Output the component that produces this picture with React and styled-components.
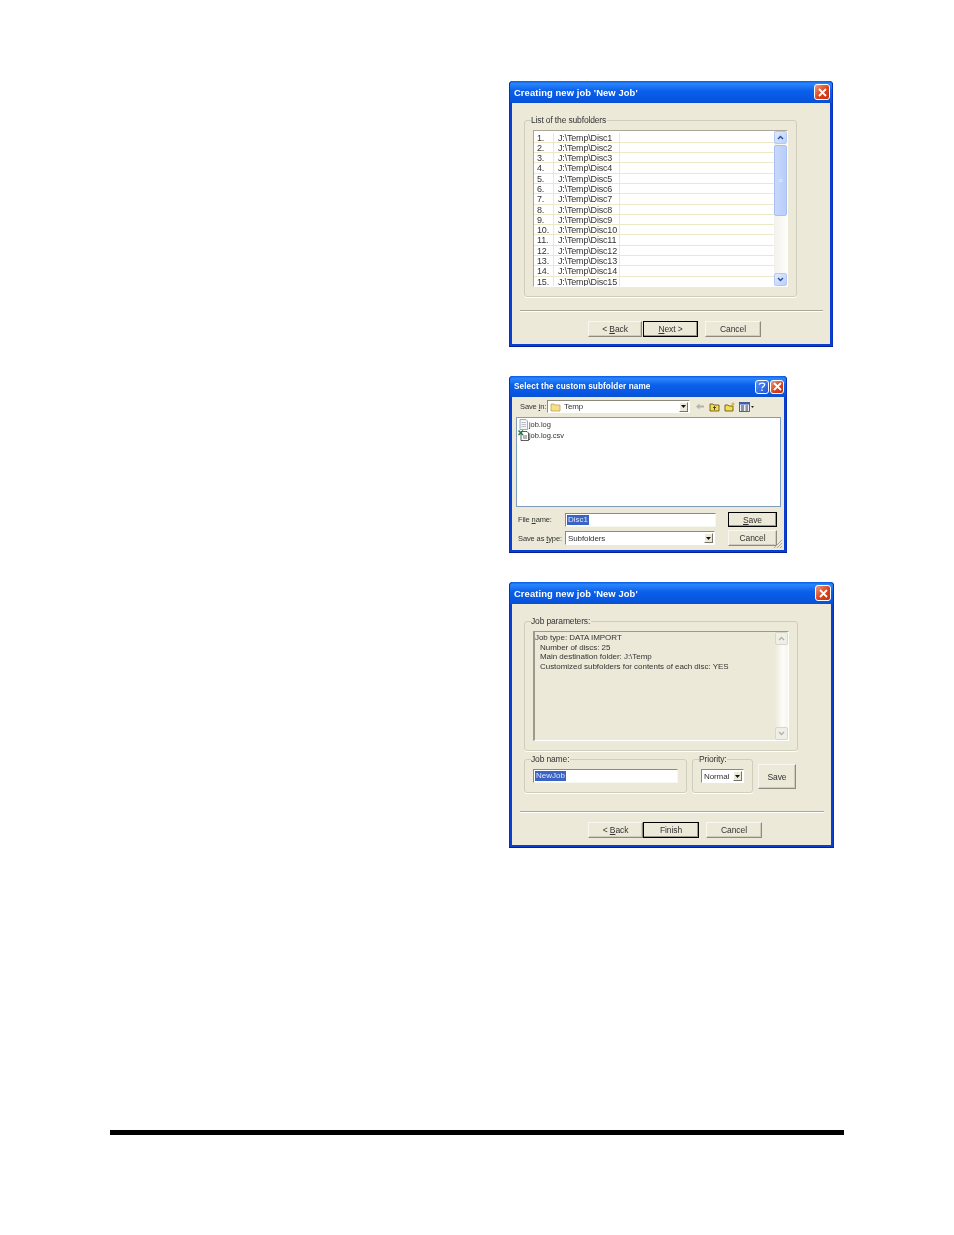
import React from 'react'
import styled, { createGlobalStyle } from 'styled-components';

const GlobalStyle = createGlobalStyle`
  html, body {
    margin: 0;
    padding: 0;
    background: #fff;
  }
  body {
    font-family: "Liberation Sans", Arial, sans-serif;
    font-size: 8px;
    color: #222;
  }
`;

const Page = styled.div`
  width: 954px;
  height: 1235px;
  box-sizing: border-box;
  padding: 81px 110px 0;
  overflow: hidden;
`;

const Windows = styled.div`
  margin-left: 399px;
  display: flex;
  flex-direction: column;
  gap: 29px;
  align-items: flex-start;
`;

const Rule = styled.div`
  height: 5px;
  background: #000;
  margin-top: 282px;
`;

const Frame = styled.div`
  width: ${(p) => p.$width}px;
  box-sizing: border-box;
  padding: 0 3px 3px;
  background: #0a3fd0;
  border-radius: 4px 4px 0 0;
  box-shadow: inset 0 -1px 0 #04209a, inset 1px 0 0 #0830b8, inset -1px 0 0 #0830b8;
  filter: blur(0.25px);
`;

const TitleBar = styled.div`
  height: ${(p) => (p.$small ? 21 : 22)}px;
  margin: 0 -2px;
  padding: 0 2px 0 4px;
  display: flex;
  align-items: center;
  gap: 1px;
  border-radius: 4px 4px 0 0;
  background: linear-gradient(180deg, #0a5ce8 0%, #2a86fa 12%, #0a5fea 45%, #0757e2 80%, #0a50d0 100%);
`;

const TitleText = styled.div`
  flex: 1;
  color: #fff;
  font-weight: bold;
  font-size: ${(p) => (p.$small ? 8.2 : 9.4)}px;
  letter-spacing: 0.1px;
  white-space: nowrap;
`;

const CaptionButton = styled.div`
  width: ${(p) => (p.$small ? 12 : 14)}px;
  height: ${(p) => (p.$small ? 12 : 14)}px;
  border: 1px solid #fff;
  border-radius: 3px;
  display: flex;
  align-items: center;
  justify-content: center;
  background: ${(p) =>
    p.$help
      ? 'linear-gradient(135deg, #5a92f5, #1e55d8)'
      : 'linear-gradient(135deg, #ee9a80, #d8431c 55%, #c23210)'};
`;

const Body = styled.div`
  background: #ece9d8;
  padding: ${(p) => p.$padding};
  position: relative;
`;

const Group = styled.fieldset`
  margin: ${(p) => p.$margin || '0'};
  padding: ${(p) => p.$padding || '5px 8px 9px'};
  width: ${(p) => p.$width}px;
  box-sizing: border-box;
  border: 1px solid #cfcdbd;
  border-radius: 3px;
  min-width: 0;
  box-shadow: 0 1px 0 #fff;
`;

const Legend = styled.legend`
  padding: 0 1px 0 0;
  margin-left: -2px;
  height: 10px;
  line-height: 11px;
  font-size: 8.5px;
  letter-spacing: -0.15px;
  color: #333;
`;

const ListBox = styled.div`
  height: 157px;
  display: flex;
  overflow: hidden;
  box-sizing: border-box;
  border-top: 1px solid #aca899;
  border-left: 1px solid #aca899;
  border-right: 1px solid #fff;
  border-bottom: 1px solid #fff;
  background: #fff;
`;

const Rows = styled.div`
  flex: 1;
  overflow: hidden;
  padding-top: 1.5px;
`;

const Row = styled.div`
  display: grid;
  grid-template-columns: 20px 66px 1fr;
  height: 10.3px;
  line-height: 10px;
  box-sizing: border-box;
  border-bottom: 1px solid #ece9c8;
  font-size: 9px;
  letter-spacing: -0.18px;
  color: #333;
`;

const Cell = styled.div`
  padding-left: ${(p) => p.$pad}px;
  border-right: ${(p) => (p.$line ? '1px solid #ece9c8' : 'none')};
  white-space: nowrap;
`;

const Scrollbar = styled.div`
  width: 13px;
  flex: none;
  display: flex;
  flex-direction: column;
  background: ${(p) =>
    p.$disabled
      ? 'linear-gradient(90deg, #ece9d8, #fdfdfa 60%, #f6f5ee)'
      : 'linear-gradient(90deg, #f3f1ec, #fdfdfa)'};
`;

const ScrollButton = styled.div`
  height: 13px;
  flex: none;
  box-sizing: border-box;
  border: 1px solid ${(p) => (p.$disabled ? '#d8d6c8' : '#b4c8f6')};
  border-radius: 2px;
  background: ${(p) => (p.$disabled ? '#f0efe6' : 'linear-gradient(135deg, #e1eafe, #bcd0fa)')};
  display: flex;
  align-items: center;
  justify-content: center;
`;

const ScrollThumb = styled.div`
  height: 71px;
  flex: none;
  margin-top: 1px;
  box-sizing: border-box;
  border: 1px solid #a8bff4;
  border-radius: 2px;
  background: linear-gradient(90deg, #c9d8fc, #b8cdfa);
  display: flex;
  align-items: center;
  justify-content: center;
  color: #eef3ff;
  font-size: 7px;
  line-height: 7px;
`;

const ScrollGap = styled.div`
  flex: 1;
`;

const Separator = styled.div`
  margin: ${(p) => p.$margin};
  border-top: 1px solid #aca899;
  border-bottom: 1px solid #fff;
`;

const ButtonRow = styled.div`
  display: flex;
  padding-left: 76px;
  margin-top: 9px;
`;

const Button = styled.div`
  width: ${(p) => p.$width}px;
  height: ${(p) => p.$height || 16}px;
  margin: ${(p) => p.$margin || '0'};
  box-sizing: border-box;
  flex: none;
  display: flex;
  align-items: center;
  justify-content: center;
  font-size: 8.5px;
  letter-spacing: -0.1px;
  color: #333;
  background: #ece9d8;
  border-style: solid;
  border-width: 1px;
  border-color: ${(p) => (p.$primary ? '#000' : '#f8f7f0 #8d8b7e #8d8b7e #f8f7f0')};
  box-shadow: ${(p) =>
    p.$primary ? 'inset -1px -1px 0 #9a988b' : 'inset -1px -1px 0 #d0cdbc'};
`;

const SaveBar = styled.div`
  display: flex;
  align-items: center;
  padding: 0 0 0 8px;
  height: 13px;
`;

const FieldLabel = styled.div`
  width: ${(p) => p.$width}px;
  flex: none;
  font-size: 7.5px;
  letter-spacing: -0.12px;
  color: #333;
  white-space: nowrap;
`;

const Combo = styled.div`
  width: ${(p) => p.$width}px;
  height: ${(p) => p.$height || 14}px;
  flex: none;
  box-sizing: border-box;
  display: flex;
  align-items: center;
  gap: 3px;
  padding-left: ${(p) => p.$pad || 2}px;
  background: #fff;
  border-top: 1px solid #8c8a7c;
  border-left: 1px solid #8c8a7c;
  border-right: 1px solid #fff;
  border-bottom: 1px solid #fff;
  font-size: 8px;
  letter-spacing: -0.1px;
  color: #333;
`;

const ComboText = styled.div`
  flex: 1;
  white-space: nowrap;
`;

const ComboArrow = styled.div`
  width: 9px;
  height: 10px;
  flex: none;
  margin-right: 1px;
  box-sizing: border-box;
  display: flex;
  align-items: center;
  justify-content: center;
  background: #ece9d8;
  border: 1px solid;
  border-color: #fff #77756a #77756a #fff;
`;

const Tools = styled.div`
  display: flex;
  align-items: center;
  gap: 4px;
  margin-left: 5px;
`;

const FileList = styled.div`
  height: 90px;
  margin: 4px 3px 0 4px;
  box-sizing: border-box;
  padding: 1px 0 0 1px;
  background: #fff;
  border: 1px solid #7f9db9;
`;

const FileRow = styled.div`
  display: flex;
  align-items: center;
  height: 11px;
  font-size: 7.5px;
  letter-spacing: -0.05px;
  color: #333;
`;

const FormGrid = styled.div`
  display: grid;
  grid-template-columns: 47px 151px 49px;
  column-gap: 0;
  row-gap: 3px;
  align-items: center;
  margin: 5px 0 0 6px;
`;

const TextField = styled.div`
  height: 14px;
  box-sizing: border-box;
  padding: 1px 0 0 1px;
  background: #fff;
  border-top: 1px solid #8c8a7c;
  border-left: 1px solid #8c8a7c;
  border-right: 1px solid #f8f8f2;
  border-bottom: 1px solid #f8f8f2;
  font-size: 8px;
  line-height: 10px;
`;

const Selected = styled.span`
  display: inline-block;
  background: #3a64c4;
  color: #dfe6fa;
  height: 10px;
  padding: 0 1px;
`;

const Grip = styled.svg`
  position: absolute;
  right: 1px;
  bottom: 1px;
`;

const ParamsBox = styled.div`
  height: 110px;
  display: flex;
  box-sizing: border-box;
  border-top: 1px solid #9c9a8c;
  border-left: 2px solid #9c9a8c;
  border-right: 1px solid #fff;
  border-bottom: 1px solid #fff;
`;

const ParamsText = styled.div`
  flex: 1;
  padding-top: 1px;
  font-size: 8px;
  letter-spacing: -0.04px;
  line-height: 9.6px;
  color: #333;
`;

const ParamLine = styled.div`
  padding-left: ${(p) => (p.$first ? 0 : 5)}px;
  white-space: nowrap;
`;

const LowerRow = styled.div`
  display: flex;
  align-items: flex-start;
  margin-top: 3px;
`;

const ChevronUp = ({ color = '#2a4d9a' }) => (
  <svg width="7" height="5" viewBox="0 0 7 5">
    <path d="M1 4 L3.5 1.5 L6 4" fill="none" stroke={color} strokeWidth="1.4" />
  </svg>
);

const ChevronDown = ({ color = '#2a4d9a' }) => (
  <svg width="7" height="5" viewBox="0 0 7 5">
    <path d="M1 1 L3.5 3.5 L6 1" fill="none" stroke={color} strokeWidth="1.4" />
  </svg>
);

const CaretDown = () => (
  <svg width="5" height="3" viewBox="0 0 5 3">
    <path d="M0 0 H5 L2.5 3 Z" fill="#111" />
  </svg>
);

const CloseIcon = () => (
  <svg width="9" height="9" viewBox="0 0 9 9">
    <path d="M1 1 L8 8 M8 1 L1 8" stroke="#fff" strokeWidth="1.8" />
  </svg>
);

const FolderIcon = () => (
  <svg width="11" height="10" viewBox="0 0 11 10">
    <path d="M1 2 H4 L5 3 H10 V9 H1 Z" fill="#f7e08a" stroke="#b89a3a" strokeWidth="0.7" />
  </svg>
);

const BackIcon = () => (
  <svg width="10" height="9" viewBox="0 0 10 9">
    <path d="M1 4.5 L4.5 1.5 V3.5 H9 V5.5 H4.5 V7.5 Z" fill="#b5b3a6" />
  </svg>
);

const UpFolderIcon = () => (
  <svg width="11" height="10" viewBox="0 0 11 10">
    <path d="M1 2 H4 L5 3 H10 V9 H1 Z" fill="#f2dc50" stroke="#5a4a10" strokeWidth="0.8" />
    <path d="M5.5 8 V4.8 M4 6 L5.5 4.5 L7 6" fill="none" stroke="#222" strokeWidth="0.8" />
  </svg>
);

const NewFolderIcon = () => (
  <svg width="11" height="10" viewBox="0 0 11 10">
    <path d="M1 3 H4 L5 4 H9 V9 H1 Z" fill="#f2dc50" stroke="#5a4a10" strokeWidth="0.8" />
    <path d="M9 0.5 V3.5 M7.5 2 H10.5" stroke="#c9a21c" strokeWidth="0.9" />
  </svg>
);

const ViewsIcon = () => (
  <svg width="15" height="10" viewBox="0 0 15 10">
    <rect x="0.5" y="0.5" width="10" height="9" fill="#e8eefc" stroke="#2d3f80" strokeWidth="0.8" />
    <rect x="0.5" y="0.5" width="10" height="2" fill="#3a5cb0" />
    <path d="M2 4 H5 M2 6 H5 M2 8 H5 M6.5 4 H9 M6.5 6 H9 M6.5 8 H9" stroke="#222" strokeWidth="0.9" />
    <path d="M12 4 H15 L13.5 6 Z" fill="#222" />
  </svg>
);

const LogFileIcon = () => (
  <svg width="11" height="11" viewBox="0 0 11 11">
    <path d="M2 0.5 H8 L9.5 2 V10.5 H2 Z" fill="#f4f6f8" stroke="#8a96a6" strokeWidth="0.8" />
    <path d="M3.5 3.5 H8 M3.5 5.5 H8 M3.5 7.5 H8" stroke="#a0a8b4" strokeWidth="0.7" />
  </svg>
);

const CsvFileIcon = () => (
  <svg width="11" height="11" viewBox="0 0 11 11">
    <path d="M3 1.5 H9 L10.5 3 V10.5 H3 Z" fill="#fff" stroke="#333" strokeWidth="0.8" />
    <path d="M0.5 0.5 L5 5 M5 0.5 L0.5 5" stroke="#1f7a3a" strokeWidth="1.5" />
    <path d="M5 6 H9 M5 8 H9" stroke="#333" strokeWidth="0.7" />
  </svg>
);

const subfolders = Array.from({ length: 15 }, (_, i) => i + 1);

const Window = ({ width, title, help, small, padding, children }) => (
  <Frame $width={width}>
    <TitleBar $small={small}>
      <TitleText $small={small}>{title}</TitleText>
      {help && (
        <CaptionButton $help $small={small}>
          <svg width="8" height="10" viewBox="0 0 9 11">
            <path d="M1.5 3 C1.5 0.5 7.5 0.5 7.5 3 C7.5 5 4.5 5 4.5 7" fill="none" stroke="#fff" strokeWidth="1.4" />
            <rect x="3.7" y="8.3" width="1.6" height="1.6" fill="#fff" />
          </svg>
        </CaptionButton>
      )}
      <CaptionButton $small={small}><CloseIcon /></CaptionButton>
    </TitleBar>
    <Body $padding={padding}>{children}</Body>
  </Frame>
);

const SubfoldersWindow = () => (
  <Window width={324} title="Creating new job 'New Job'" padding="12px 0 7px">
    <Group $width={273} $margin="0 0 0 12px">
      <Legend>List of the subfolders</Legend>
      <ListBox>
        <Rows>
          {subfolders.map((n) => (
            <Row key={n}>
              <Cell $pad={3} $line>{n}.</Cell>
              <Cell $pad={4} $line>{`J:\\Temp\\Disc${n}`}</Cell>
              <Cell />
            </Row>
          ))}
        </Rows>
        <Scrollbar>
          <ScrollButton><ChevronUp /></ScrollButton>
          <ScrollThumb>≡</ScrollThumb>
          <ScrollGap />
          <ScrollButton><ChevronDown /></ScrollButton>
        </Scrollbar>
      </ListBox>
    </Group>
    <Separator $margin="13px 7px 0 8px" />
    <ButtonRow>
      <Button $width={54}>&lt;&nbsp;<u>B</u>ack</Button>
      <Button $width={55} $primary $margin="0 7px 0 1px"><u>N</u>ext &gt;</Button>
      <Button $width={56}>Cancel</Button>
    </ButtonRow>
  </Window>
);

const SaveWindow = () => (
  <Window width={278} title="Select the custom subfolder name" help small padding="3px 0 4px">
    <SaveBar>
      <FieldLabel $width={27}>Save <u>i</u>n:</FieldLabel>
      <Combo $width={143} $height={13}>
        <FolderIcon />
        <ComboText>Temp</ComboText>
        <ComboArrow><CaretDown /></ComboArrow>
      </Combo>
      <Tools>
        <BackIcon />
        <UpFolderIcon />
        <NewFolderIcon />
        <ViewsIcon />
      </Tools>
    </SaveBar>
    <FileList>
      <FileRow><LogFileIcon />job.log</FileRow>
      <FileRow><CsvFileIcon />job.log.csv</FileRow>
    </FileList>
    <FormGrid>
      <FieldLabel>File <u>n</u>ame:</FieldLabel>
      <TextField><Selected>Disc1</Selected></TextField>
      <Button $width={49} $height={15} $primary $margin="0 0 0 12px"><u>S</u>ave</Button>
      <FieldLabel>Save as <u>t</u>ype:</FieldLabel>
      <Combo $width={150} $height={14}>
        <ComboText>Subfolders</ComboText>
        <ComboArrow><CaretDown /></ComboArrow>
      </Combo>
      <Button $width={49} $height={16} $margin="0 0 0 12px">Cancel</Button>
    </FormGrid>
    <Grip width="11" height="11" viewBox="0 0 11 11">
      <path d="M10 2 L2 10 M10 5 L5 10 M10 8 L8 10" stroke="#aca899" strokeWidth="1" />
    </Grip>
  </Window>
);

const FinishWindow = () => (
  <Window width={325} title="Creating new job 'New Job'" padding="12px 0 7px">
    <Group $width={274} $margin="0 0 0 12px">
      <Legend>Job parameters:</Legend>
      <ParamsBox>
        <ParamsText>
          <ParamLine $first>Job type: DATA IMPORT</ParamLine>
          <ParamLine>Number of discs: 25</ParamLine>
          <ParamLine>{'Main destination folder: J:\\Temp'}</ParamLine>
          <ParamLine>Customized subfolders for contents of each disc: YES</ParamLine>
        </ParamsText>
        <Scrollbar $disabled>
          <ScrollButton $disabled><ChevronUp color="#b5b3a6" /></ScrollButton>
          <ScrollGap />
          <ScrollButton $disabled><ChevronDown color="#b5b3a6" /></ScrollButton>
        </Scrollbar>
      </ParamsBox>
    </Group>
    <LowerRow>
      <Group $width={163} $margin="0 0 0 12px" $padding="5px 8px 9px">
        <Legend>Job name:</Legend>
        <TextField><Selected>NewJob</Selected></TextField>
      </Group>
      <Group $width={61} $margin="0 0 0 5px" $padding="5px 8px 9px">
        <Legend>Priority:</Legend>
        <Combo $width={43} $pad={2}>
          <ComboText>Normal</ComboText>
          <ComboArrow><CaretDown /></ComboArrow>
        </Combo>
      </Group>
      <Button $width={38} $height={25} $margin="10px 0 0 5px">Save</Button>
    </LowerRow>
    <Separator $margin="18px 7px 0 8px" />
    <ButtonRow>
      <Button $width={55}>&lt;&nbsp;<u>B</u>ack</Button>
      <Button $width={56} $primary $margin="0 7px 0 0">Finish</Button>
      <Button $width={56}>Cancel</Button>
    </ButtonRow>
  </Window>
);

const App = () => (
  <>
    <GlobalStyle />
    <Page>
      <Windows>
        <SubfoldersWindow />
        <SaveWindow />
        <FinishWindow />
      </Windows>
      <Rule />
    </Page>
  </>
);

export default App;
